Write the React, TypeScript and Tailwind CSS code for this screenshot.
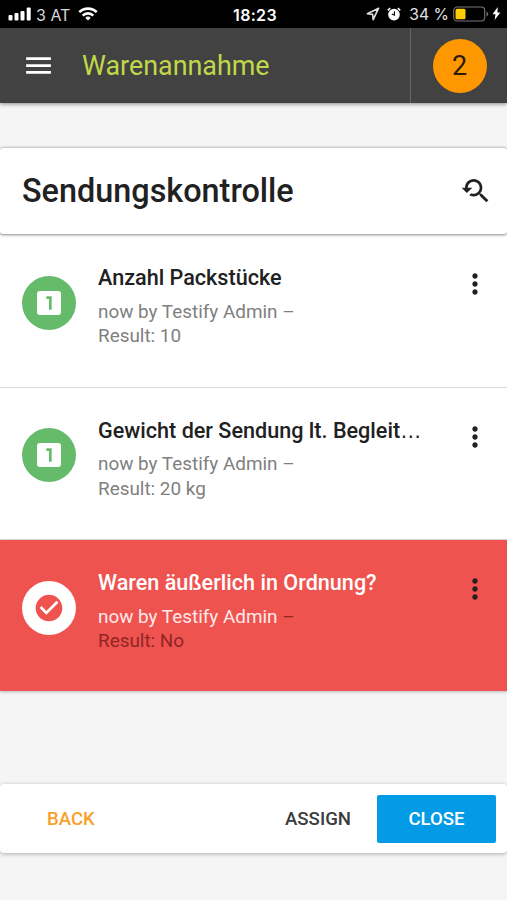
import {
  MdCheckCircle,
  MdLooksOne,
  MdMenu,
  MdMoreVert,
  MdYoutubeSearchedFor,
} from "react-icons/md";

interface Task {
  title: string;
  author: string;
  result: string;
  shortened?: boolean;
  failed?: boolean;
}

const tasks: Task[] = [
  { title: "Anzahl Packstücke", author: "Testify Admin", result: "10" },
  { title: "Gewicht der Sendung lt. Begleit", author: "Testify Admin", result: "20 kg", shortened: true },
  { title: "Waren äußerlich in Ordnung?", author: "Testify Admin", result: "No", failed: true },
];

export default function App() {
  return (
    <div className="flex h-[900px] w-[507px] flex-col overflow-hidden bg-[#f5f5f5] font-['Roboto',sans-serif] text-[#212121]">
      <StatusBar />
      <Header />

      <main className="mt-[45px]">
        <div className="relative z-10 flex h-[86px] items-center justify-between rounded-[3px] bg-white pr-4 pl-[22px] shadow-[0_0.5px_3px_rgba(0,0,0,0.45)]">
          <h1 className="text-[32.4px] leading-[38px] font-medium">Sendungskontrolle</h1>
          <MdYoutubeSearchedFor className="size-8" />
        </div>
        <div className="bg-white pt-px">
          {tasks.map((task) => (
            <TaskRow key={task.title} task={task} />
          ))}
        </div>
      </main>

      <footer className="mt-[93px] flex h-[69px] items-center rounded-[4px] bg-white pr-[11px] pl-[47px] text-[18.6px] font-medium shadow-[0_1px_4px_rgba(0,0,0,0.3)]">
        <button className="pt-[2px] text-[#f9a02c]">BACK</button>
        <button className="ml-auto pt-[2px] text-[#3c3c3c]">ASSIGN</button>
        <button className="ml-[26px] h-12 w-[119px] rounded-[2px] bg-[#039be5] pt-[2px] text-white">
          CLOSE
        </button>
      </footer>
    </div>
  );
}

function StatusBar() {
  return (
    <div className="grid h-7 shrink-0 grid-cols-[1fr_auto_1fr] items-center bg-black pr-[6px] pl-2 font-['Inter',sans-serif] text-[16px] text-white">
      <div className="flex items-center">
        <svg className="h-[14px] w-6" viewBox="0 0 24 14" fill="currentColor">
          <rect x="0.5" y="8" width="4" height="5.5" rx="1" />
          <rect x="6.5" y="6" width="4" height="7.5" rx="1" />
          <rect x="12.5" y="4" width="4" height="9.5" rx="1" />
          <rect x="18.7" y="0.5" width="4" height="13" rx="1" />
        </svg>
        <span className="ml-1 pt-px text-[#d8d8d8]">3 AT</span>
        <svg className="ml-2 h-[14px] w-5" viewBox="0 0 20 14" fill="none" stroke="currentColor" strokeWidth="2.6">
          <path d="M1.3 5.2a12.3 12.3 0 0 1 17.4 0" />
          <path d="M4.7 8.6a7.5 7.5 0 0 1 10.6 0" />
          <path d="M10 13.6 7.3 10.9a3.8 3.8 0 0 1 5.4 0z" fill="currentColor" stroke="none" />
        </svg>
      </div>
      <span className="pt-px pl-px font-semibold tracking-[0.3px]">18:23</span>
      <div className="flex items-center justify-end">
        <svg className="size-[14px]" viewBox="0 0 14 14" fill="none" stroke="#e0e0e0" strokeWidth="1.6" strokeLinejoin="round">
          <path d="M12.6 1.2 1.4 6.8l5.2.6.6 5.2z" />
        </svg>
        <svg className="ml-[7px] size-[14px]" viewBox="0 0 14 14" fill="none">
          <circle cx="7" cy="7.6" r="5.8" fill="#fff" />
          <path d="M.8 3.3 3.2 1M13.2 3.3 10.8 1" stroke="#fff" strokeWidth="1.6" />
          <path d="M7.4 4.2v4L4.8 7" stroke="#000" strokeWidth="1.1" />
        </svg>
        <span className="ml-2 pt-[2px] text-[15.7px] text-[#e2e2e2]">34 %</span>
        <svg className="ml-1 h-4 w-9" viewBox="0 0 36 16" fill="none">
          <rect x="0.7" y="1" width="31" height="14" rx="3.5" stroke="#77777a" strokeWidth="1.1" />
          <rect x="2.5" y="2.8" width="10" height="10.4" rx="1.5" fill="#ffcc00" />
          <path d="M33.5 5.5c2 .8 2 4.2 0 5z" fill="#77777a" />
        </svg>
        <svg className="ml-[3px] h-[13px] w-[9px]" viewBox="0 0 9 13" fill="#fff">
          <path d="M5.8 0 .5 7.2h3L2.6 13 8.4 5.4h-3z" />
        </svg>
      </div>
    </div>
  );
}

function Header() {
  return (
    <header className="flex h-[75px] shrink-0 items-center bg-[#424242] shadow-[0_1px_4px_rgba(0,0,0,0.45)]">
      <MdMenu className="ml-[22px] size-[33px] text-white" />
      <span className="ml-[27px] pt-[2px] text-[26.9px] text-[#c0d849]">Warenannahme</span>
      <div className="ml-auto flex h-full w-[97px] items-center justify-center border-l border-[#666] pl-px">
        <span className="flex size-[54px] items-center justify-center rounded-full bg-[#ff9800] pt-[2px] text-[27px] text-[#2b1a05]">
          2
        </span>
      </div>
    </header>
  );
}

function TaskRow({ task }: { task: Task }) {
  return (
    <div
      className={`flex items-start pr-4 pl-[22px] ${
        task.failed
          ? "h-[151px] bg-[#ef5350] text-white shadow-[0_1px_3px_rgba(0,0,0,0.25)]"
          : "h-[152.5px] border-b border-[#e0e0e0] bg-white shadow-[0_1px_3px_rgba(0,0,0,0.12)]"
      }`}
    >
      <div
        className={`mt-[40.5px] flex size-[54px] shrink-0 items-center justify-center rounded-full ${
          task.failed ? "bg-white text-[#ef5350]" : "bg-[#66bb6a] text-white"
        }`}
      >
        {task.failed ? <MdCheckCircle className="size-8" /> : <MdLooksOne className="size-8" />}
      </div>

      <div className="mt-[29.4px] ml-[22px] grow">
        <h2 className="text-[21.6px] leading-[28px] font-medium whitespace-nowrap">
          {task.title}
          {task.shortened && <span className="font-['Liberation_Sans',sans-serif] font-normal">…</span>}
        </h2>
        <p className={`mt-[7.5px] text-[18.9px] leading-[24.2px] ${task.failed ? "text-[#8f2624]" : "text-[#808080]"}`}>
          <span className={task.failed ? "text-[#ffe9e8]" : ""}>now by {task.author}</span> –
          <br />
          Result: {task.result}
        </p>
      </div>

      <MdMoreVert className="mt-[33px] size-8 shrink-0 text-[#212121]" />
    </div>
  );
}
